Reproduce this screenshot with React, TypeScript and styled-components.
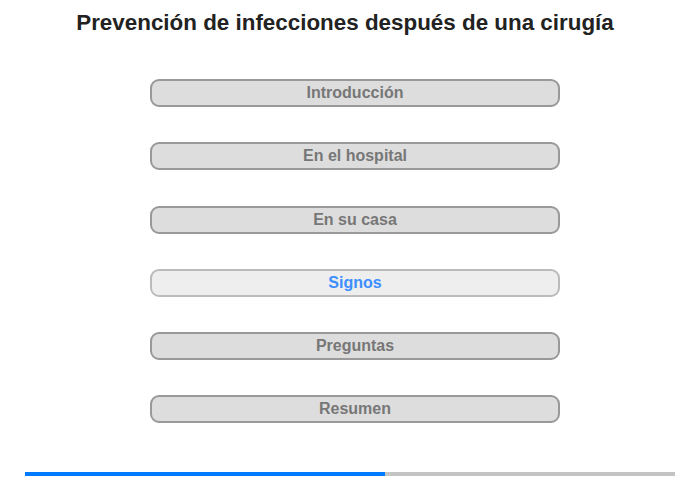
import { createGlobalStyle } from "styled-components";
import styled from "styled-components";

////////////////////////////////////////////////////////////////////////// Data

const sections = [
  "Introducción",
  "En el hospital",
  "En su casa",
  "Signos",
  "Preguntas",
  "Resumen",
];

const current = 3;
const progress = 55.4;

/////////////////////////////////////////////////////////

const GlobalStyle = createGlobalStyle`
  html, body {
    margin: 0;
    padding: 0;
    background: #fff;
    font-family: "Liberation Sans", Arial, sans-serif;
  }
`;

export const Page = styled.div`
  width: 700px;
  height: 480px;
  display: flex;
  flex-direction: column;
  box-sizing: border-box;
  padding-top: 10px;
`;

export const Title = styled.h1`
  margin: 0;
  padding-right: 10px;
  font-size: 22.4px;
  line-height: 26px;
  font-weight: 700;
  color: #222;
  text-align: center;
`;

export const Menu = styled.nav`
  display: flex;
  flex-direction: column;
  gap: 35.3px;
  width: 410px;
  margin: 43px 0 0 150px;
`;

export const MenuButton = styled.div<{ $active?: boolean }>`
  box-sizing: border-box;
  height: 28px;
  display: flex;
  align-items: center;
  justify-content: center;
  border: 2px solid ${(p) => (p.$active ? "#bbb" : "#999")};
  border-radius: 9px;
  background: ${(p) => (p.$active ? "#eee" : "#ddd")};
  color: ${(p) => (p.$active ? "#3d8eff" : "#777")};
  font-size: 16px;
  font-weight: 700;
  cursor: pointer;
`;

//////////////////////////////////////////////////////

export const Progress = styled.div`
  margin: auto 25px 4px 25px;
  height: 4px;
  background: #c4c4c4;
  display: flex;
`;

export const ProgressFill = styled.div`
  height: 100%;
  background: #007bff;
`;

export default function App() {
  return (
    <>
      <GlobalStyle />
      <Page>
        <Title>Prevención de infecciones después de una cirugía</Title>
        <Menu>
          {sections.map((s, i) => (
            <MenuButton key={s} $active={i === current}>
              {s}
            </MenuButton>
          ))}
        </Menu>
        <Progress>
          <ProgressFill style={{ width: `${progress}%` }} />
        </Progress>
      </Page>
    </>
  );
}
